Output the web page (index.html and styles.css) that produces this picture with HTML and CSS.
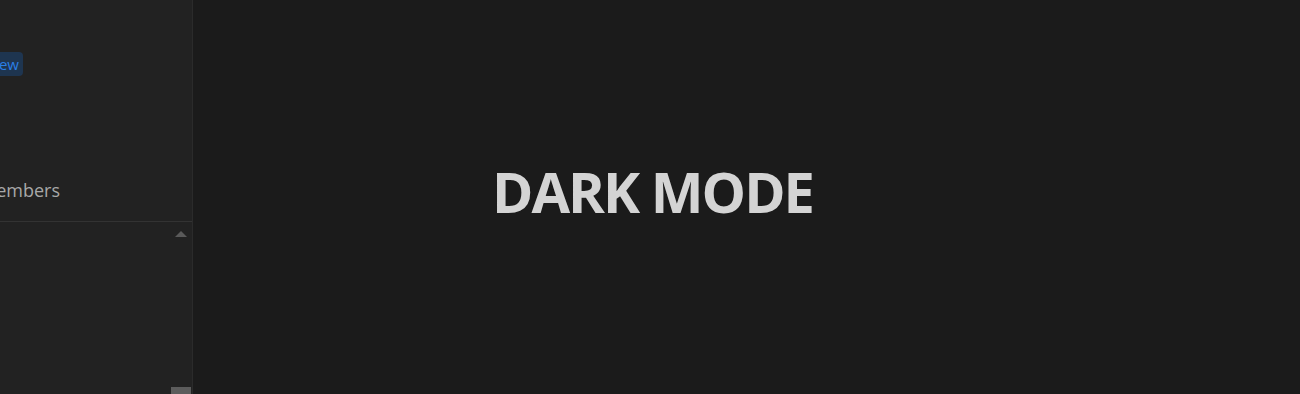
FILE: index.html
```html
<!DOCTYPE html>
<html>
<head>
<meta charset="utf-8">
<link rel="stylesheet" href="styles.css">
</head>
<body>
<div class="app">
  <aside class="sidebar">
    <div class="sidebar-top">
      <div class="row row-new">
        <span class="item-label">Preview</span>
        <span class="badge">New</span>
      </div>
      <div class="row row-members">
        <span class="members">Members</span>
      </div>
    </div>
    <div class="sidebar-list">
      <div class="list-content"></div>
      <div class="scrollbar">
        <div class="arrow-up"></div>
        <div class="track"></div>
        <div class="thumb"></div>
      </div>
    </div>
  </aside>
  <main class="main">
    <h1 class="title">DARK MODE</h1>
  </main>
</div>
</body>
</html>
```
FILE: styles.css
```css
html, body {
  margin: 0;
  padding: 0;
  height: 100%;
  background: #1b1b1b;
  font-family: "Open Sans", "Noto Sans", sans-serif;
}
.app {
  display: flex;
  height: 394px;
  overflow: hidden;
}
.sidebar {
  width: 192px;
  flex: none;
  background: #222222;
  border-right: 1px solid #2b2b2b;
  display: flex;
  flex-direction: column;
  overflow: hidden;
}
.sidebar-top {
  height: 221px;
  flex: none;
  border-bottom: 1px solid #333333;
}
.row {
  display: flex;
  align-items: center;
  justify-content: flex-end;
  white-space: nowrap;
}
.row-new {
  width: 23px;
  height: 24px;
  margin-top: 52px;
  gap: 8px;
}
.item-label {
  font-size: 16px;
  color: #bbbbbb;
}
.badge {
  background: #1e3550;
  color: #2b7fe6;
  font-size: 15px;
  border-radius: 4px;
  padding: 0 4px 0 5px;
  height: 24px;
  line-height: 24px;
}
.row-members {
  width: 60px;
  margin-top: 101px;
  height: 26px;
}
.members {
  font-size: 18px;
  color: #a8a8a8;
}
.sidebar-list {
  flex: 1;
  display: flex;
}
.list-content {
  flex: 1;
}
.scrollbar {
  width: 21px;
  display: flex;
  flex-direction: column;
  align-items: center;
  margin-right: 1px;
}
.arrow-up {
  margin-top: 9px;
  width: 0;
  height: 0;
  border-left: 6px solid transparent;
  border-right: 6px solid transparent;
  border-bottom: 6px solid #5a5a5a;
}
.track {
  flex: 1;
}
.thumb {
  width: 20px;
  height: 7px;
  background: #5c5c5c;
}
.main {
  flex: 1;
  display: flex;
  align-items: center;
  justify-content: center;
  padding-right: 188px;
}
.title {
  margin: 0;
  margin-top: -12px;
  font-size: 56px;
  font-weight: 700;
  color: #d4d4d4;
  letter-spacing: -2px;
}
```
